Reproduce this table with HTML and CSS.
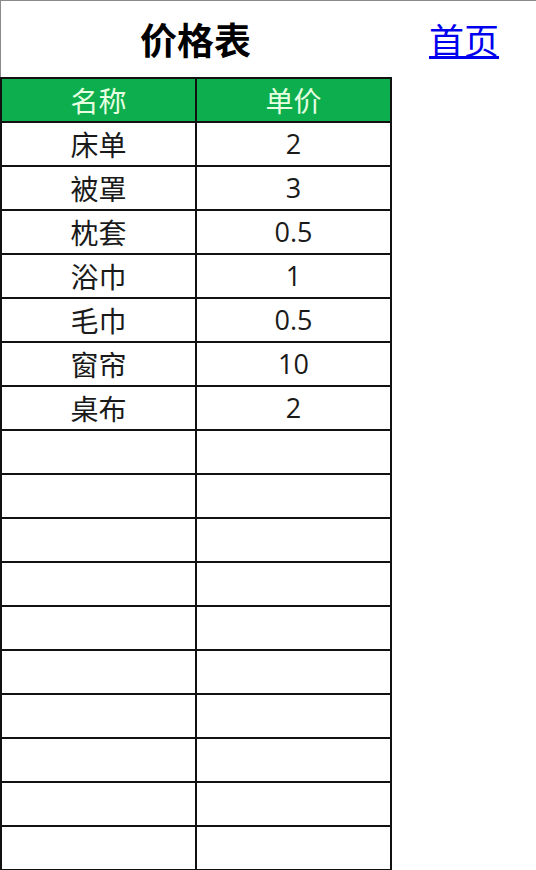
FILE: index.html
```html
<!DOCTYPE html>
<html lang="zh-CN">
<head>
<meta charset="utf-8">
<title>价格表</title>
<link rel="stylesheet" href="styles.css">
</head>
<body>
<div class="page">
  <div class="main">
    <h1 class="title">价格表</h1>
    <table class="prices">
      <thead>
        <tr><th>名称</th><th>单价</th></tr>
      </thead>
      <tbody>
        <tr><td>床单</td><td class="num">2</td></tr>
        <tr><td>被罩</td><td class="num">3</td></tr>
        <tr><td>枕套</td><td class="num">0.5</td></tr>
        <tr><td>浴巾</td><td class="num">1</td></tr>
        <tr><td>毛巾</td><td class="num">0.5</td></tr>
        <tr><td>窗帘</td><td class="num">10</td></tr>
        <tr><td>桌布</td><td class="num">2</td></tr>
        <tr><td></td><td></td></tr>
        <tr><td></td><td></td></tr>
        <tr><td></td><td></td></tr>
        <tr><td></td><td></td></tr>
        <tr><td></td><td></td></tr>
        <tr><td></td><td></td></tr>
        <tr><td></td><td></td></tr>
        <tr><td></td><td></td></tr>
        <tr><td></td><td></td></tr>
        <tr><td></td><td></td></tr>
      </tbody>
    </table>
  </div>
  <a class="home" href="#">首页</a>
</div>
</body>
</html>
```
FILE: styles.css
```css
html, body {
  margin: 0;
  padding: 0;
  background: #fff;
}
body {
  font-family: "Noto Sans CJK SC", "Noto Sans", sans-serif;
  color: #111;
  overflow: hidden;
}
.page {
  display: flex;
  align-items: flex-start;
  border-top: 1px solid #8a8a8a;
  border-left: 1px solid #8a8a8a;
  height: 900px;
}
.main {
  width: 391px;
  margin-left: -1px;
}
.title {
  margin: 0;
  height: 76px;
  line-height: 76px;
  text-align: center;
  font-size: 37px;
  font-weight: 700;
  color: #000;
}
.prices {
  border-collapse: collapse;
  width: 392px;
  table-layout: fixed;
}
.prices th,
.prices td {
  border: 2px solid #111;
  height: 42px;
  padding: 0;
  text-align: center;
  font-size: 28px;
  line-height: 42px;
  font-weight: 400;
  color: #1a1a1a;
}
.prices td.num {
  font-family: "Open Sans", "Noto Sans CJK SC", sans-serif;
  font-size: 27px;
}
.prices th {
  background: #0cae4e;
  color: #e6ffe0;
}
.home {
  margin-left: 38px;
  margin-top: 16px;
  font-size: 35px;
  line-height: 44px;
  color: #0000ee;
  text-decoration: underline;
  text-underline-offset: 2px;
}
```
